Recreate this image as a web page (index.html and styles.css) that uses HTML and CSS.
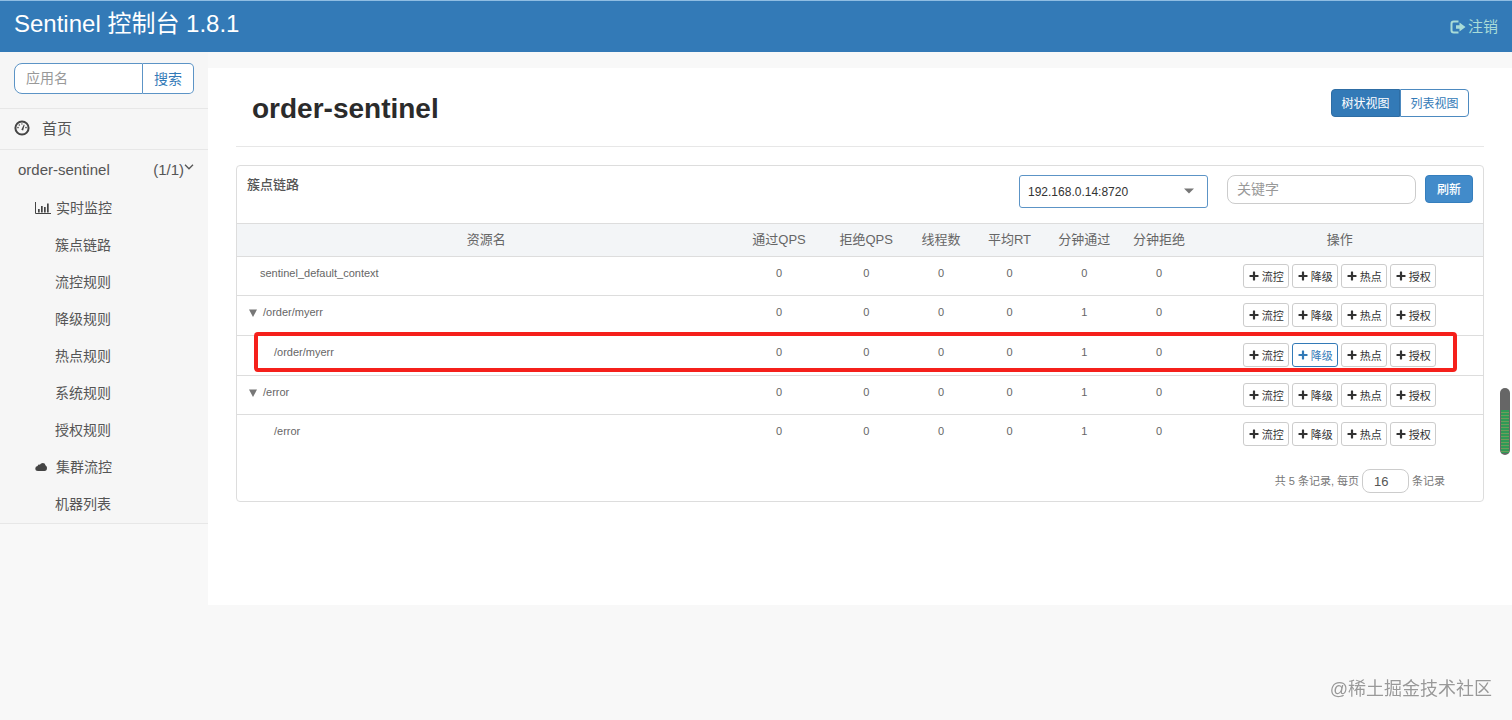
FILE: index.html
```html
<!DOCTYPE html>
<html lang="zh-CN">
<head>
<meta charset="utf-8">
<title>Sentinel 控制台 1.8.1</title>
<link rel="stylesheet" href="styles.css">
</head>
<body>
<svg class="defs" aria-hidden="true">
  <symbol id="plus" viewBox="0 0 10 10"><path d="M4.300 .5h1.400q.4 0 .4.400v3h3q.4 0 .4.400v1.400q0 .4-.4.400h-3v3q0 .4-.4.400H4.300q-.4 0-.4-.4v-3h-3q-.4 0-.4-.4V4.300q0-.4.4-.4h3v-3q0-.4.4-.4z"/></symbol>
</svg>
<header class="topbar">
  <h1 class="brand">Sentinel 控制台 1.8.1</h1>
  <a class="logout" href="#">
    <svg class="logout-icon" viewBox="0 0 16 14" aria-hidden="true"><path d="M8.500 1.500H3.800Q1.500 1.500 1.500 3.800v6.400q0 2.300 2.300 2.300h4.700" fill="none" stroke="currentColor" stroke-width="2"/><path d="M9.500 2.500L15.500 7l-6 4.500V8.800H6V5.200h3.500z" fill="currentColor"/></svg>注销</a>
</header>
<div class="layout">
  <aside class="sidebar">
    <form class="search">
      <input class="search-input" type="text" placeholder="应用名" aria-label="应用名">
      <button class="search-button" type="button">搜索</button>
    </form>
    <nav>
      <a class="home" href="#">
        <svg class="gauge" viewBox="0 0 16 16" aria-hidden="true"><circle cx="8" cy="8" r="6.600" fill="none" stroke="currentColor" stroke-width="2"/><path d="M7.300 9.800L9.900 4.600l.7.300-1.500 5.500z" fill="currentColor"/><g fill="currentColor"><circle cx="4" cy="7.600" r=".8"/><circle cx="5.300" cy="5" r=".8"/><circle cx="7.900" cy="3.900" r=".7"/><circle cx="12" cy="7.600" r=".8"/></g></svg>首页</a>
      <a class="app" href="#"><span>order-sentinel</span><span class="count">(1/1)<svg class="chevron" viewBox="0 0 10 6" aria-hidden="true"><path d="M1 .8l4 4 4-4" fill="none" stroke="currentColor" stroke-width="1.300"/></svg></span></a>
      <ul class="menu">
        <li><a href="#"><svg class="menu-icon" viewBox="0 0 16 12" aria-hidden="true"><path d="M.5 0v11.500H16" fill="none" stroke="currentColor"/><path d="M3 7h1.700v3.500H3zM6 4h1.700v6.500H6zM9 5h1.700v5.500H9zM12 1.500h1.700v9H12z" fill="currentColor"/></svg>实时监控</a></li>
        <li><a href="#">簇点链路</a></li>
        <li><a href="#">流控规则</a></li>
        <li><a href="#">降级规则</a></li>
        <li><a href="#">热点规则</a></li>
        <li><a href="#">系统规则</a></li>
        <li><a href="#">授权规则</a></li>
        <li><a href="#"><svg class="menu-icon" viewBox="0 0 16 12" aria-hidden="true"><path d="M3 10Q.3 10 .3 7.500T2.600 5Q3 3.300 4.800 3.700 5.800 2 7.800 2q2.200 0 2.800 2.400Q12 5 12 6.800 12 10 9.500 10z" fill="currentColor"/></svg>集群流控</a></li>
        <li><a href="#">机器列表</a></li>
      </ul>
    </nav>
  </aside>
  <main class="content">
    <div class="page-head">
      <h2 class="page-title">order-sentinel</h2>
      <div class="views">
        <button class="view active" type="button">树状视图</button><button class="view" type="button">列表视图</button>
      </div>
    </div>
    <section class="card">
      <div class="card-head">
        <h3 class="card-title">簇点链路</h3>
        <div class="machine">
          <select class="machine-select" aria-label="机器"><option>192.168.0.14:8720</option></select>
          <svg class="caret" viewBox="0 0 10 6" aria-hidden="true"><path d="M0 .5h10L5 5.500z"/></svg>
        </div>
        <input class="keyword" type="text" placeholder="关键字" aria-label="关键字">
        <button class="refresh" type="button">刷新</button>
      </div>
      <table class="resources">
        <colgroup><col class="c-name"><col class="c-qps"><col class="c-qps"><col class="c-thread"><col class="c-num"><col class="c-num"><col class="c-num"><col class="c-ops"></colgroup>
        <thead><tr><th>资源名</th><th>通过QPS</th><th>拒绝QPS</th><th>线程数</th><th>平均RT</th><th>分钟通过</th><th>分钟拒绝</th><th>操作</th></tr></thead>
        <tbody>
          <tr>
            <td class="name leaf">sentinel_default_context</td><td>0</td><td>0</td><td>0</td><td>0</td><td>0</td><td>0</td>
            <td class="ops"><div class="op-list"><button class="op" type="button"><svg class="plus"><use href="#plus"/></svg>流控</button><button class="op" type="button"><svg class="plus"><use href="#plus"/></svg>降级</button><button class="op" type="button"><svg class="plus"><use href="#plus"/></svg>热点</button><button class="op" type="button"><svg class="plus"><use href="#plus"/></svg>授权</button></div></td>
          </tr>
          <tr>
            <td class="name"><svg class="twist" viewBox="0 0 8 8" aria-hidden="true"><path d="M0 .5h8L4 8z"/></svg>/order/myerr</td><td>0</td><td>0</td><td>0</td><td>0</td><td>1</td><td>0</td>
            <td class="ops"><div class="op-list"><button class="op" type="button"><svg class="plus"><use href="#plus"/></svg>流控</button><button class="op" type="button"><svg class="plus"><use href="#plus"/></svg>降级</button><button class="op" type="button"><svg class="plus"><use href="#plus"/></svg>热点</button><button class="op" type="button"><svg class="plus"><use href="#plus"/></svg>授权</button></div></td>
          </tr>
          <tr class="marked">
            <td class="name child">/order/myerr<span class="marker"></span></td><td>0</td><td>0</td><td>0</td><td>0</td><td>1</td><td>0</td>
            <td class="ops"><div class="op-list"><button class="op" type="button"><svg class="plus"><use href="#plus"/></svg>流控</button><button class="op selected" type="button"><svg class="plus"><use href="#plus"/></svg>降级</button><button class="op" type="button"><svg class="plus"><use href="#plus"/></svg>热点</button><button class="op" type="button"><svg class="plus"><use href="#plus"/></svg>授权</button></div></td>
          </tr>
          <tr>
            <td class="name"><svg class="twist" viewBox="0 0 8 8" aria-hidden="true"><path d="M0 .5h8L4 8z"/></svg>/error</td><td>0</td><td>0</td><td>0</td><td>0</td><td>1</td><td>0</td>
            <td class="ops"><div class="op-list"><button class="op" type="button"><svg class="plus"><use href="#plus"/></svg>流控</button><button class="op" type="button"><svg class="plus"><use href="#plus"/></svg>降级</button><button class="op" type="button"><svg class="plus"><use href="#plus"/></svg>热点</button><button class="op" type="button"><svg class="plus"><use href="#plus"/></svg>授权</button></div></td>
          </tr>
          <tr>
            <td class="name child">/error</td><td>0</td><td>0</td><td>0</td><td>0</td><td>1</td><td>0</td>
            <td class="ops"><div class="op-list"><button class="op" type="button"><svg class="plus"><use href="#plus"/></svg>流控</button><button class="op" type="button"><svg class="plus"><use href="#plus"/></svg>降级</button><button class="op" type="button"><svg class="plus"><use href="#plus"/></svg>热点</button><button class="op" type="button"><svg class="plus"><use href="#plus"/></svg>授权</button></div></td>
          </tr>
        </tbody>
      </table>
      <div class="pager">
        <label for="page-size">共 5 条记录, 每页</label>
        <input id="page-size" class="page-size" type="text" value="16">
        <span>条记录</span>
      </div>
    </section>
  </main>
</div>
<div class="level"><div class="level-fill"></div></div>
<div class="watermark">@稀土掘金技术社区</div>
</body>
</html>
```
FILE: styles.css
```css
* { box-sizing: border-box; }
body {
  margin: 0;
  min-height: 100vh;
  background: #f8f8f8;
  color: #555;
  font-family: "Liberation Sans", "Noto Sans CJK SC", sans-serif;
  font-weight: 400;
  font-size: 14px;
  line-height: 20px;
}
a { color: inherit; text-decoration: none; }
h1, h2, h3, ul { margin: 0; padding: 0; }
input, button, select { font-family: inherit; margin: 0; }
button { cursor: pointer; padding: 0; }
input::placeholder { color: #999; opacity: 1; }
.defs { display: none; }

.topbar {
  display: flex;
  justify-content: space-between;
  height: 52px;
  padding: 0 14px;
  border-top: 1px solid #8fbde2;
  background: #337ab7;
}
.brand { color: #fff; font-size: 24px; font-weight: 400; line-height: 46px; }
.logout {
  display: flex;
  align-items: center;
  gap: 2px;
  color: #a9dcd8;
  font-size: 15px;
}
.logout-icon { width: 16px; height: 14px; }

.layout { display: flex; align-items: flex-start; }
.sidebar { flex: none; width: 208px; background: #f6f6f6; }
.search { display: flex; padding: 11px 14px 14px; }
.search-input {
  flex: 1;
  min-width: 0;
  height: 31px;
  padding: 0 11px 2px;
  border: 1px solid #5c94c6;
  border-radius: 8px 0 0 8px;
  background: #fff;
  font-size: 14px;
}
.search-button {
  flex: none;
  width: 51px;
  height: 31px;
  padding-bottom: 2px;
  border: 1px solid #5c94c6;
  border-left: 0;
  border-radius: 0 5px 5px 0;
  background: #fff;
  color: #337ab7;
  font-size: 14px;
}
.home {
  display: flex;
  align-items: center;
  gap: 12px;
  height: 42px;
  padding: 0 14px;
  border-top: 1px solid #e7e7e7;
  border-bottom: 1px solid #e7e7e7;
  font-size: 15px;
}
.gauge { width: 16px; height: 16px; margin-bottom: 3px; color: #444; }
.app {
  display: flex;
  justify-content: space-between;
  padding: 10px 14px 10px 18px;
  font-size: 15px;
}
.count { display: flex; }
.chevron { width: 10px; height: 6px; margin-top: 4px; }
.menu { list-style: none; border-bottom: 1px solid #e7e7e7; }
.menu a {
  display: flex;
  align-items: center;
  height: 37px;
  padding: 0 0 2px 55px;
}
.menu-icon { width: 16px; height: 12px; margin-left: -20px; margin-right: 5px; color: #444; }

.content {
  flex: 1;
  min-width: 0;
  margin-top: 16px;
  padding: 0 28px 103px;
  background: #fff;
}
.page-head {
  display: flex;
  justify-content: space-between;
  align-items: flex-start;
  height: 79px;
  padding: 21px 15px 0 16px;
  border-bottom: 1px solid #e7e7e7;
}
.page-title { color: #2b2b2b; font-size: 28px; line-height: 40px; }
.views { display: flex; }
.view {
  width: 69px;
  height: 28px;
  padding-bottom: 1px;
  border: 1px solid #4d8ac0;
  border-radius: 0 4px 4px 0;
  background: #fff;
  color: #337ab7;
  font-size: 12px;
}
.view.active {
  border-radius: 4px 0 0 4px;
  background: #337ab7;
  border-color: #2e6da4;
  color: #fff;
}

.card { margin-top: 18px; border: 1px solid #ddd; border-radius: 4px; }
.card-head {
  display: flex;
  align-items: flex-start;
  height: 57px;
  padding: 9px 10px;
}
.card-title { margin-right: auto; color: #555; font-size: 13px; font-weight: 500; }
.machine { position: relative; width: 189px; margin-right: 19px; }
.machine-select {
  display: block;
  width: 100%;
  height: 33px;
  padding: 0 8px;
  border: 1px solid #5c94c6;
  border-radius: 3px;
  background: #fff;
  color: #333;
  font-size: 12px;
  appearance: none;
}
.caret { position: absolute; top: 13px; right: 14px; width: 10px; height: 6px; fill: #777; pointer-events: none; }
.keyword {
  width: 189px;
  height: 29px;
  margin-right: 9px;
  padding: 0 9px 2px;
  border: 1px solid #ccc;
  border-radius: 8px;
  font-size: 14px;
}
.refresh {
  width: 48px;
  height: 28px;
  padding-bottom: 1px;
  border: 1px solid #357ebd;
  border-radius: 4px;
  background: #428bca;
  color: #fff;
  font-size: 12px;
  font-weight: 500;
}

.resources { width: 100%; table-layout: fixed; border-collapse: separate; border-spacing: 0; }
.c-name { width: 40%; }
.c-qps { width: 7%; }
.c-thread { width: 5%; }
.c-num { width: 6%; }
.c-ops { width: 23%; }
th {
  height: 33px;
  padding: 0;
  border-top: 1px solid #ddd;
  background: #f3f5f7;
  color: #666;
  font-size: 13px;
  font-weight: 400;
}
td {
  height: 40px;
  padding: 6px 0 0;
  border-top: 1px solid #ddd;
  color: #666;
  font-size: 11px;
  text-align: center;
  vertical-align: top;
}
tr:nth-child(3n+1) td { height: 39px; }
.name { padding-left: 12px; text-align: left; }
.name.leaf { padding-left: 23px; }
.name.child { padding-left: 37px; }
.twist { width: 8px; height: 8px; margin-right: 6px; fill: #777; vertical-align: -1px; }
.ops { padding-top: 7px; }
.op-list { display: flex; justify-content: center; gap: 3px; }
.op {
  display: flex;
  align-items: center;
  justify-content: center;
  gap: 3px;
  width: 46px;
  height: 24px;
  border: 1px solid #ccc;
  border-radius: 3px;
  background: #fff;
  color: #333;
  font-size: 11px;
}
.op.selected { border-color: #337ab7; color: #337ab7; }
.plus { width: 10px; height: 10px; fill: currentColor; }
.marked { position: relative; }
.marker {
  position: absolute;
  inset: -3px 26px 3px 17px;
  border: 4px solid #f5201b;
  border-radius: 4px;
  pointer-events: none;
}
.pager {
  display: flex;
  align-items: center;
  justify-content: flex-end;
  gap: 3px;
  padding: 15px 38px 8px;
  color: #777;
  font-size: 11px;
}
.page-size {
  width: 47px;
  height: 24px;
  padding: 0 11px;
  border: 1px solid #ccc;
  border-radius: 8px;
  color: #555;
  font-size: 13px;
}

.level {
  position: fixed;
  top: 388px;
  right: 2px;
  width: 10px;
  height: 67px;
  padding: 22px 1px 2px;
  border-radius: 5px;
  background: #666;
}
.level-fill { height: 100%; background: repeating-linear-gradient(#2f9a56 0 2px, #6f9a5c 2px 3px); }
.watermark {
  position: fixed;
  right: 20px;
  bottom: 18px;
  color: #999;
  font-size: 18px;
  line-height: 26px;
  text-shadow: 0 0 2px #fff;
}
```
